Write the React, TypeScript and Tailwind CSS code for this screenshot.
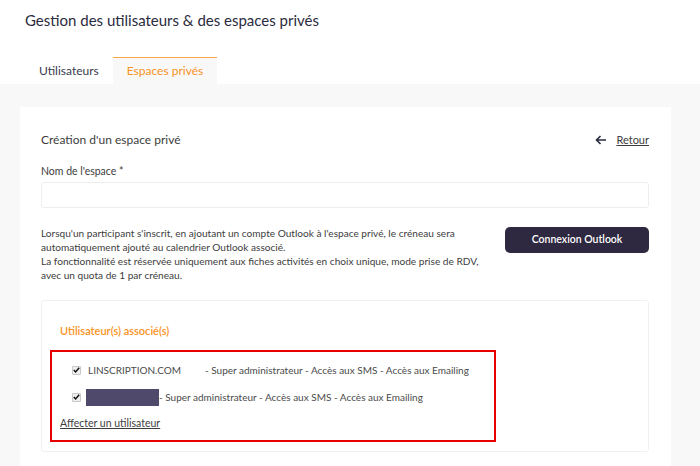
function Check() {
    return (
        <span className="w-[9px] h-[9px] shrink-0 flex items-center justify-center rounded-[1px] border border-[#c8c8c8] bg-[#f0f0f0]">
            <svg width="7" height="6" viewBox="0 0 7 6" fill="none" stroke="#111" strokeWidth="1.5">
                <path d="M0.8 3l1.8 1.9L6.2 0.8" />
            </svg>
        </span>
    );
}

export default function App() {
    return (
        <div className="w-[700px] h-[466px] overflow-hidden bg-white text-[#454545]" style={{ fontFamily: 'Lato, sans-serif' }}>
            <h1 className="pt-[9px] pl-[25px] text-[15px] leading-[22px] text-[#2a2b3d]">Gestion des utilisateurs &amp; des espaces privés</h1>
            <div className="flex mt-[26px] pl-[25px] text-[12px]">
                <div className="h-[27px] px-[14px] flex items-center text-[#3a3b4d]">Utilisateurs</div>
                <div className="h-[27px] px-[14px] flex items-center bg-[#f8f8f8] border-t border-[#f7a64a] text-[#f7931e]">Espaces privés</div>
            </div>
            <div className="bg-[#f8f8f8] pt-[23px] pl-[20px] pr-[29px] h-[400px]">
                <div className="bg-white pl-[21px] pr-[22px] pt-[24px] h-[400px]">
                    <div className="flex items-center justify-between">
                        <span className="text-[12px] text-[#3d3d3d]">Création d'un espace privé</span>
                        <div className="flex items-center gap-[9px] text-[11px]">
                            <svg width="12" height="10" viewBox="0 0 12 10" fill="none" stroke="#2a2b3d" strokeWidth="1.6">
                                <path d="M11 5H1.5M5.5 1L1.5 5l4 4" />
                            </svg>
                            <span className="underline text-[#3d3d3d]">Retour</span>
                        </div>
                    </div>
                    <div className="mt-[15px] text-[10.5px] text-[#3d3d3d]">Nom de l'espace *</div>
                    <div className="mt-[2px] h-[26px] border border-[#eeeeee] rounded-[3px]" />
                    <div className="flex justify-between mt-[18px]">
                        <p className="text-[10.1px] leading-[14px] text-[#3d3d3d] w-[440px]">
                            Lorsqu'un participant s'inscrit, en ajoutant un compte Outlook à l'espace privé, le créneau sera automatiquement ajouté au calendrier Outlook associé.<br />
                            La fonctionnalité est réservée uniquement aux fiches activités en choix unique, mode prise de RDV, avec un quota de 1 par créneau.
                        </p>
                        <button className="w-[144px] h-[26px] mt-[1px] bg-[#2e2840] rounded-[5px] text-white text-[10.5px] font-semibold">Connexion Outlook</button>
                    </div>
                    <div className="mt-[18px] border border-[#f0f0f0] rounded-[3px] h-[152px] pt-[22px] pl-[8px]">
                        <div className="pl-[10px] text-[11px] font-semibold text-[#f7931e]">Utilisateur(s) associé(s)</div>
                        <div className="mt-[11px] w-[446px] h-[92px] border-2 border-[#e60000] pl-[8px] pt-[9px] text-[10px] text-[#4a4a4a]">
                            <div className="flex items-center h-[18px] pl-[12px]">
                                <Check />
                                <span className="ml-[7px] w-[117px]">LINSCRIPTION.COM</span>
                                <span>- Super administrateur - Accès aux SMS - Accès aux Emailing</span>
                            </div>
                            <div className="flex items-center h-[18px] pl-[12px] mt-[9px]">
                                <Check />
                                <span className="ml-[5px] w-[73px] h-[17px] bg-[#4f4a6b]" />
                                <span>- Super administrateur - Accès aux SMS - Accès aux Emailing</span>
                            </div>
                            <div className="mt-[10px] underline text-[10.5px] text-[#3d3d3d]">Affecter un utilisateur</div>
                        </div>
                    </div>
                </div>
            </div>
        </div>
    );
}
